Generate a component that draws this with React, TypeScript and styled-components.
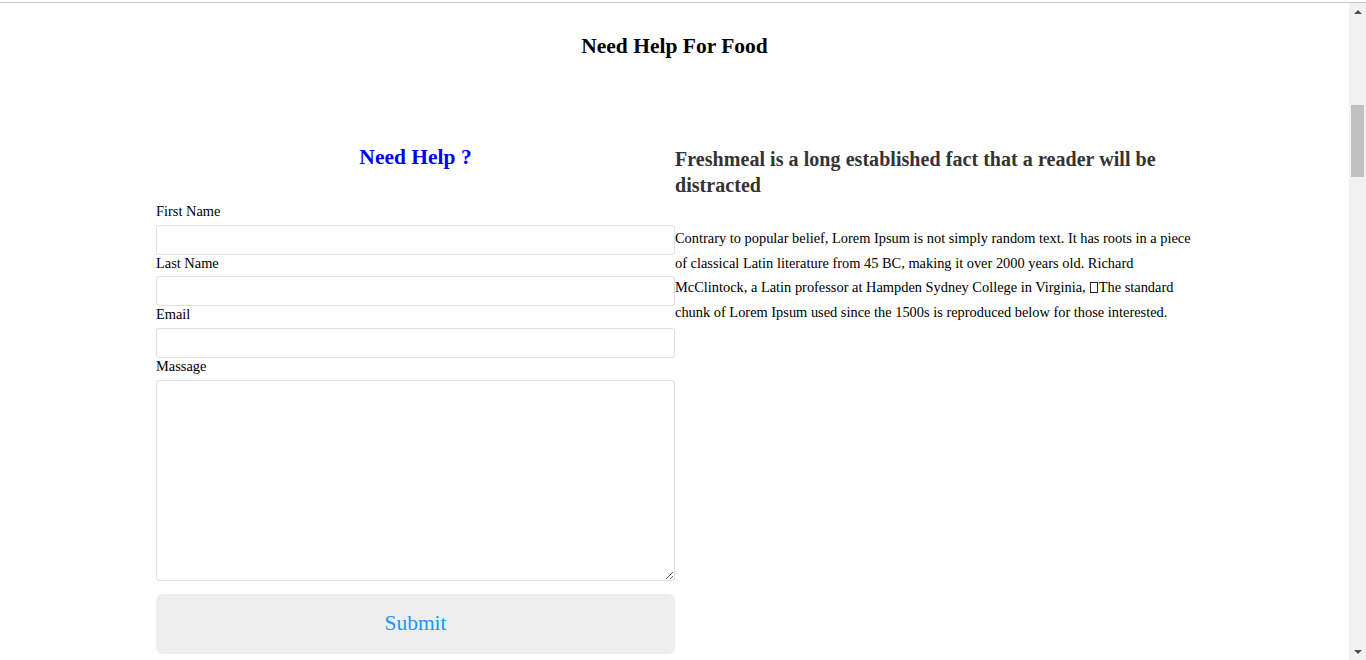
import React from "react";
import styled, { createGlobalStyle } from "styled-components";

const Global = createGlobalStyle`
  html, body { margin: 0; padding: 0; height: 100%; overflow: hidden; background: #fff; }
  body { font-family: "Liberation Serif", "Times New Roman", serif; color: #000; }
  * { box-sizing: border-box; }
`;

const Root = styled.div`
  display: flex;
  flex-direction: column;
  height: 100vh;
  overflow: hidden;
`;

const TopLine = styled.div`
  margin-top: 2px;
  height: 1px;
  background: #c8c8c8;
  flex: none;
`;

const Frame = styled.div`
  display: flex;
  flex: 1;
  min-height: 0;
`;

const Content = styled.main`
  flex: 1;
  min-width: 0;
  overflow: hidden;
`;

const Scrollbar = styled.div`
  width: 17px;
  flex: none;
  background: #f1f1f1;
  display: flex;
  flex-direction: column;
  align-items: center;
`;

const Arrow = styled.div<{ $down?: boolean }>`
  width: 17px;
  height: 17px;
  display: flex;
  align-items: center;
  justify-content: center;
  &::before {
    content: "";
    border-left: 4px solid transparent;
    border-right: 4px solid transparent;
    ${(p) => (p.$down ? "border-top: 4px solid #505050;" : "border-bottom: 4px solid #505050;")}
  }
`;

const Track = styled.div`
  flex: 1;
  width: 100%;
  display: flex;
  flex-direction: column;
  align-items: center;
`;

const Thumb = styled.div`
  width: 13px;
  height: 72px;
  margin-top: 85px;
  background: #c1c1c1;
`;

const Title = styled.h1`
  margin: 30px 0 0;
  text-align: center;
  font-size: 21.5px;
  line-height: 26px;
  font-weight: bold;
  color: #000;
`;

const Container = styled.section`
  width: 1037px;
  margin: 83px auto 0;
  display: grid;
  grid-template-columns: 519px 1fr;
`;

const FormCol = styled.form`
  display: flex;
  flex-direction: column;
`;

const FormHeading = styled.h2`
  margin: 2px 0 33px;
  text-align: center;
  font-size: 21.5px;
  line-height: 26px;
  font-weight: bold;
  color: #0000ff;
`;

const Label = styled.label`
  display: block;
  font-size: 14.4px;
  line-height: 16.7px;
  margin-bottom: 5px;
  color: #000;
`;

const Input = styled.input`
  display: block;
  width: 100%;
  height: 30px;
  margin: 0;
  border: 1px solid #e0e0e0;
  border-radius: 3px;
  font: inherit;
  outline: none;
  background: #fff;
`;

const TextArea = styled.textarea`
  display: block;
  width: 100%;
  height: 201px;
  margin: 0;
  border: 1px solid #e0e0e0;
  border-radius: 3px;
  font: inherit;
  outline: none;
  background: #fff;
`;

const Submit = styled.button`
  margin-top: 13px;
  width: 100%;
  height: 60px;
  border: none;
  border-radius: 7px;
  background: #eeeeee;
  color: #2196f3;
  font-family: "Liberation Serif", "Times New Roman", serif;
  font-size: 21.5px;
  cursor: pointer;
`;

const InfoCol = styled.div`
  padding-top: 4px;
`;

const InfoHeading = styled.h3`
  margin: 0;
  font-size: 20px;
  line-height: 26px;
  letter-spacing: 0.05px;
  font-weight: bold;
  color: #333;
`;

const InfoText = styled.p`
  margin: 28px 0 0;
  font-size: 14.4px;
  line-height: 24.5px;
  color: #000;
`;

const Tofu = styled.span`
  display: inline-block;
  width: 8px;
  height: 11px;
  border: 1px solid #222;
  margin: 0 1px 0 4px;
  vertical-align: -1px;
`;

const fields = [
  { id: "first", label: "First Name", type: "text" },
  { id: "last", label: "Last Name", type: "text" },
  { id: "email", label: "Email", type: "email" },
];

export default function App() {
  return (
    <Root>
      <Global />
      <TopLine />
      <Frame>
        <Content>
          <Title>Need Help For Food</Title>
          <Container>
            <FormCol onSubmit={(e) => e.preventDefault()}>
              <FormHeading>Need Help ?</FormHeading>
              {fields.map((f) => (
                <div key={f.id}>
                  <Label htmlFor={f.id}>{f.label}</Label>
                  <Input id={f.id} type={f.type} />
                </div>
              ))}
              <div>
                <Label htmlFor="msg">Massage</Label>
                <TextArea id="msg" />
              </div>
              <Submit type="submit">Submit</Submit>
            </FormCol>
            <InfoCol>
              <InfoHeading>
                Freshmeal is a long established fact that a reader will be distracted
              </InfoHeading>
              <InfoText>
                Contrary to popular belief, Lorem Ipsum is not simply random text. It has roots in a piece of classical
                Latin literature from 45 BC, making it over 2000 years old. Richard McClintock, a Latin professor at
                Hampden Sydney College in Virginia,<Tofu />The standard chunk of Lorem Ipsum used since the 1500s is
                reproduced below for those interested.
              </InfoText>
            </InfoCol>
          </Container>
        </Content>
        <Scrollbar>
          <Arrow />
          <Track>
            <Thumb />
          </Track>
          <Arrow $down />
        </Scrollbar>
      </Frame>
    </Root>
  );
}
